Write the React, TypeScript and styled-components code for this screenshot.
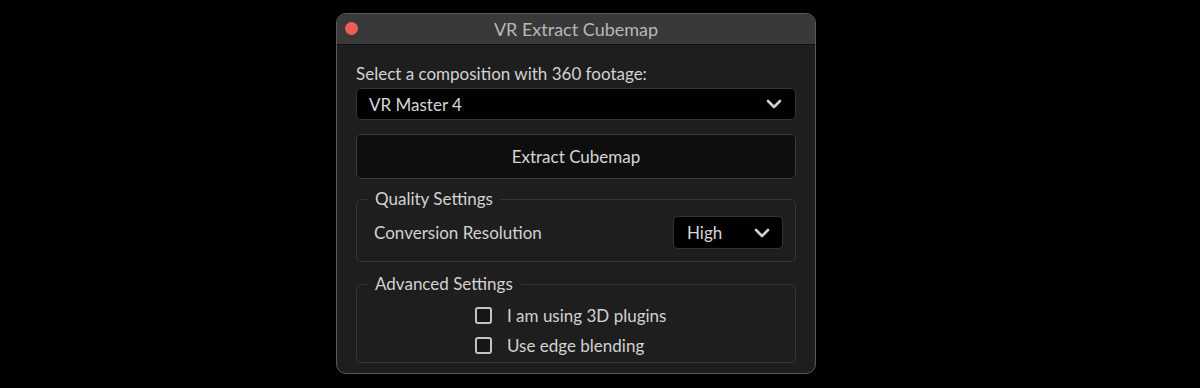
import React from 'react';
import styled, { createGlobalStyle } from 'styled-components';

const GlobalStyle = createGlobalStyle`
  html, body {
    margin: 0;
    padding: 0;
    background: #000;
  }
  body {
    font-family: Lato, "Noto Sans", sans-serif;
    -webkit-font-smoothing: antialiased;
  }
`;

const Page = styled.div`
  display: flex;
  justify-content: flex-start;
  padding: 13px 0 0 336px;
  width: 1200px;
  height: 388px;
  box-sizing: border-box;
`;

const Window = styled.div`
  width: 480px;
  height: 361px;
  box-sizing: border-box;
  border: 1px solid #5a5a5a;
  border-radius: 10px;
  background: #1e1e1e;
  overflow: hidden;
  display: flex;
  flex-direction: column;
`;

const TitleBar = styled.div`
  height: 30px;
  flex: none;
  display: flex;
  align-items: center;
  justify-content: center;
  position: relative;
  background: #393939;
  border-bottom: 1px solid #0e0e0e;
  color: #b8b8b8;
  font-size: 18px;
`;

const CloseDot = styled.span`
  position: absolute;
  left: 8px;
  top: 8px;
  width: 13px;
  height: 13px;
  border-radius: 50%;
  background: #ec5f58;
`;

const Body = styled.div`
  display: flex;
  flex-direction: column;
  padding: 19px 19px 0 19px;
  color: #d2d2d2;
  font-size: 17px;
`;

const Label = styled.div`
  line-height: 20px;
  margin-bottom: 4px;
`;

const Select = styled.div<{ $width?: number; $pad: number }>`
  display: flex;
  align-items: center;
  justify-content: space-between;
  box-sizing: border-box;
  width: ${(p) => (p.$width ? `${p.$width}px` : '100%')};
  height: ${(p) => (p.$width ? 33 : 32)}px;
  padding: 0 ${(p) => p.$pad}px 0 ${(p) => (p.$width ? 13 : 12)}px;
  background: #000;
  border: 1px solid #333;
  border-radius: 5px;
  color: #d6d6d6;
`;

const Chevron = () => (
  <svg width="16" height="10" viewBox="0 0 16 10">
    <path d="M2 2 L8 8 L14 2" fill="none" stroke="#d0d0d0" strokeWidth="2.6" strokeLinecap="round" strokeLinejoin="round" />
  </svg>
);

const Button = styled.div`
  margin-top: 14px;
  height: 45px;
  box-sizing: border-box;
  display: flex;
  align-items: center;
  justify-content: center;
  background: #0e0e0e;
  border: 1px solid #3a3a3a;
  border-radius: 5px;
  color: #d6d6d6;
`;

const Group = styled.fieldset<{ $top: number }>`
  margin: ${(p) => p.$top}px 0 0 0;
  padding: 0 12px 0 17px;
  border: 1px solid #363636;
  border-radius: 5px;
  min-width: 0;
`;

const Legend = styled.legend`
  padding: 0 8px;
  margin-left: -7px;
  line-height: 20px;
  color: #d2d2d2;
`;

const Row = styled.div`
  display: flex;
  align-items: center;
  justify-content: space-between;
  margin: 7px 0 12px;
`;

const Checks = styled.div`
  display: flex;
  flex-direction: column;
  align-items: flex-start;
  gap: 8px;
  margin: 10px 0 6px 101px;
`;

const Check = styled.label`
  display: flex;
  align-items: center;
  gap: 15px;
  height: 22px;
`;

const Box = styled.span`
  width: 17px;
  height: 17px;
  box-sizing: border-box;
  border: 2px solid #c2c2c2;
  border-radius: 3px;
  background: #161616;
`;

export default function App() {
  return (
    <>
      <GlobalStyle />
      <Page>
        <Window>
          <TitleBar>
            <CloseDot />
            VR Extract Cubemap
          </TitleBar>
          <Body>
            <Label>Select a composition with 360 footage:</Label>
            <Select $pad={13}>
              VR Master 4
              <Chevron />
            </Select>
            <Button>Extract Cubemap</Button>
            <Group $top={10}>
              <Legend>Quality Settings</Legend>
              <Row>
                Conversion Resolution
                <Select $width={110} $pad={12}>
                  High
                  <Chevron />
                </Select>
              </Row>
            </Group>
            <Group $top={12}>
              <Legend>Advanced Settings</Legend>
              <Checks>
                <Check>
                  <Box />
                  I am using 3D plugins
                </Check>
                <Check>
                  <Box />
                  Use edge blending
                </Check>
              </Checks>
            </Group>
          </Body>
        </Window>
      </Page>
    </>
  );
}
